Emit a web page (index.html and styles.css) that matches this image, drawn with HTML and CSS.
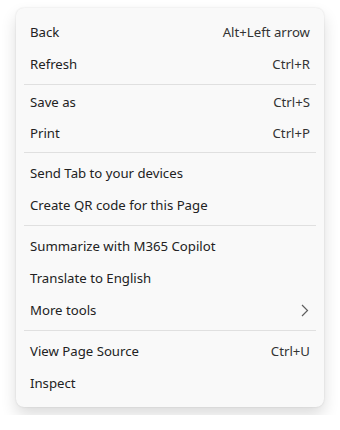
FILE: index.html
```html
<!DOCTYPE html>
<html lang="en">
<head>
<meta charset="utf-8">
<title>Context menu</title>
<link rel="stylesheet" href="styles.css">
</head>
<body>
<div class="menu" role="menu">
  <div class="item" role="menuitem"><span class="label">Back</span><span class="key">Alt+Left arrow</span></div>
  <div class="item" role="menuitem"><span class="label">Refresh</span><span class="key">Ctrl+R</span></div>
  <div class="sep sep-tight"></div>
  <div class="item item-short" role="menuitem"><span class="label">Save as</span><span class="key">Ctrl+S</span></div>
  <div class="item item-mid" role="menuitem"><span class="label">Print</span><span class="key">Ctrl+P</span></div>
  <div class="sep"></div>
  <div class="item" role="menuitem"><span class="label">Send Tab to your devices</span></div>
  <div class="item" role="menuitem"><span class="label">Create QR code for this Page</span></div>
  <div class="sep"></div>
  <div class="item" role="menuitem"><span class="label">Summarize with M365 Copilot</span></div>
  <div class="item" role="menuitem"><span class="label">Translate to English</span></div>
  <div class="item" role="menuitem"><span class="label">More tools</span>
    <svg class="chev" width="8" height="13" viewBox="0 0 8 13" aria-hidden="true"><path d="M1 1 L6.5 6.5 L1 12" fill="none" stroke="#5f5f5f" stroke-width="1.2"/></svg>
  </div>
  <div class="sep"></div>
  <div class="item" role="menuitem"><span class="label">View Page Source</span><span class="key">Ctrl+U</span></div>
  <div class="item" role="menuitem"><span class="label">Inspect</span></div>
</div>
</body>
</html>
```

FILE: styles.css
```css
html, body {
  margin: 0;
  padding: 0;
  background: #ffffff;
}
body {
  padding: 8px 16px;
  font-family: "Noto Sans", "DejaVu Sans", sans-serif;
  font-size: 13.2px;
  color: #222222;
}
.menu {
  width: 308px;
  box-sizing: border-box;
  background: #f9f9f9;
  border-radius: 8px;
  padding: 8px 0;
  box-shadow: 0 8px 16px rgba(0, 0, 0, 0.14), 0 0 2px rgba(0, 0, 0, 0.12);
}
.item {
  height: 32px;
  display: flex;
  align-items: center;
  justify-content: space-between;
  padding: 0 14px;
  box-sizing: border-box;
}
.item-short { height: 30px; }
.item-mid { height: 31px; }
.label { white-space: nowrap; }
.key {
  color: #333333;
  white-space: nowrap;
}
.chev { margin-right: 1px; }
.sep {
  height: 1px;
  background: #e0e0e0;
  margin: 4px 8px;
}
.sep-tight { margin-bottom: 2px; }
```
